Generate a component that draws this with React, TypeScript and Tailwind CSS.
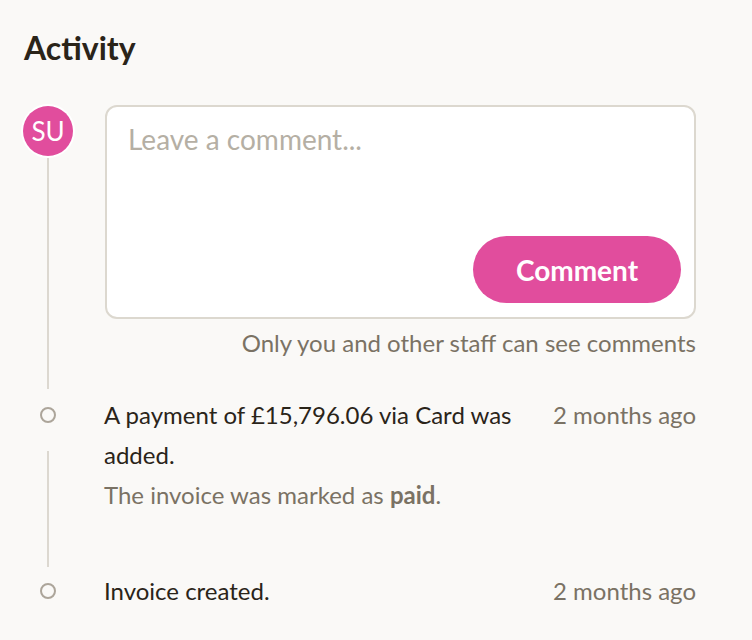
import React from "react";

const font = { fontFamily: "Lato, 'Noto Sans', sans-serif" };

export default function App() {
  return (
    <div className="min-h-[640px] w-[752px] bg-[#faf9f7] pl-6 pr-[56px] pt-[28px] text-[#2a2419]" style={font}>
      <h1 className="text-[32px] font-bold leading-[40px] text-[#2a2419]">Activity</h1>
      <div className="mt-[37px] flex flex-col">
        {/* Row 1: comment */}
        <div className="flex gap-8">
          <div className="flex w-12 flex-col items-center">
            <div className="-mt-[1px] flex h-[54px] w-[54px] shrink-0 items-center justify-center rounded-full bg-white">
              <div className="flex h-[50px] w-[50px] items-center justify-center rounded-full bg-[#e14d9d] text-[26px] leading-none text-white">
                SU
              </div>
            </div>
            <div className="mb-[6px] w-[2px] flex-1 bg-[#dcd8d0]" />
          </div>
          <div className="ml-[1px] flex flex-1 flex-col pb-8">
            <div className="flex h-[214px] flex-col rounded-[12px] border-2 border-[#dcd8cf] bg-white pl-[21px] pr-[13px] pt-[12px] pb-[14px]">
              <div className="flex-1 text-[28px] leading-[40px] text-[#b5afa4]">Leave a comment...</div>
              <div className="flex justify-end">
                <button className="flex h-[67px] w-[208px] items-center justify-center rounded-full bg-[#e14d9d] text-[28px] font-bold text-white">
                  Comment
                </button>
              </div>
            </div>
            <div className="mt-[4px] text-right text-[24px] leading-[40px] text-[#7a7264]">
              Only you and other staff can see comments
            </div>
          </div>
        </div>
        {/* Row 2: payment */}
        <div className="flex gap-8">
          <div className="flex w-12 flex-col items-center">
            <div className="flex h-10 items-center">
              <div className="h-4 w-4 rounded-full border-2 border-[#aca59a] bg-[#faf9f7]" />
            </div>
            <div className="mb-1 mt-4 w-[2px] flex-1 bg-[#dcd8d0]" />
          </div>
          <div className="flex flex-1 gap-6 pb-14">
            <div className="flex-1 text-[24px] leading-[40px]">
              <div className="text-[#2a2419]">A payment of £15,796.06 via Card was added.</div>
              <div className="text-[#7a7264]">
                The invoice was marked as <span className="font-bold">paid</span>.
              </div>
            </div>
            <div className="text-[24px] leading-[40px] text-[#7a7264]">2 months ago</div>
          </div>
        </div>
        {/* Row 3: created */}
        <div className="flex gap-8">
          <div className="flex w-12 flex-col items-center">
            <div className="flex h-10 items-center">
              <div className="h-4 w-4 rounded-full border-2 border-[#aca59a] bg-[#faf9f7]" />
            </div>
          </div>
          <div className="flex flex-1 gap-6">
            <div className="flex-1 text-[24px] leading-[40px] text-[#2a2419]">Invoice created.</div>
            <div className="text-[24px] leading-[40px] text-[#7a7264]">2 months ago</div>
          </div>
        </div>
      </div>
    </div>
  );
}
